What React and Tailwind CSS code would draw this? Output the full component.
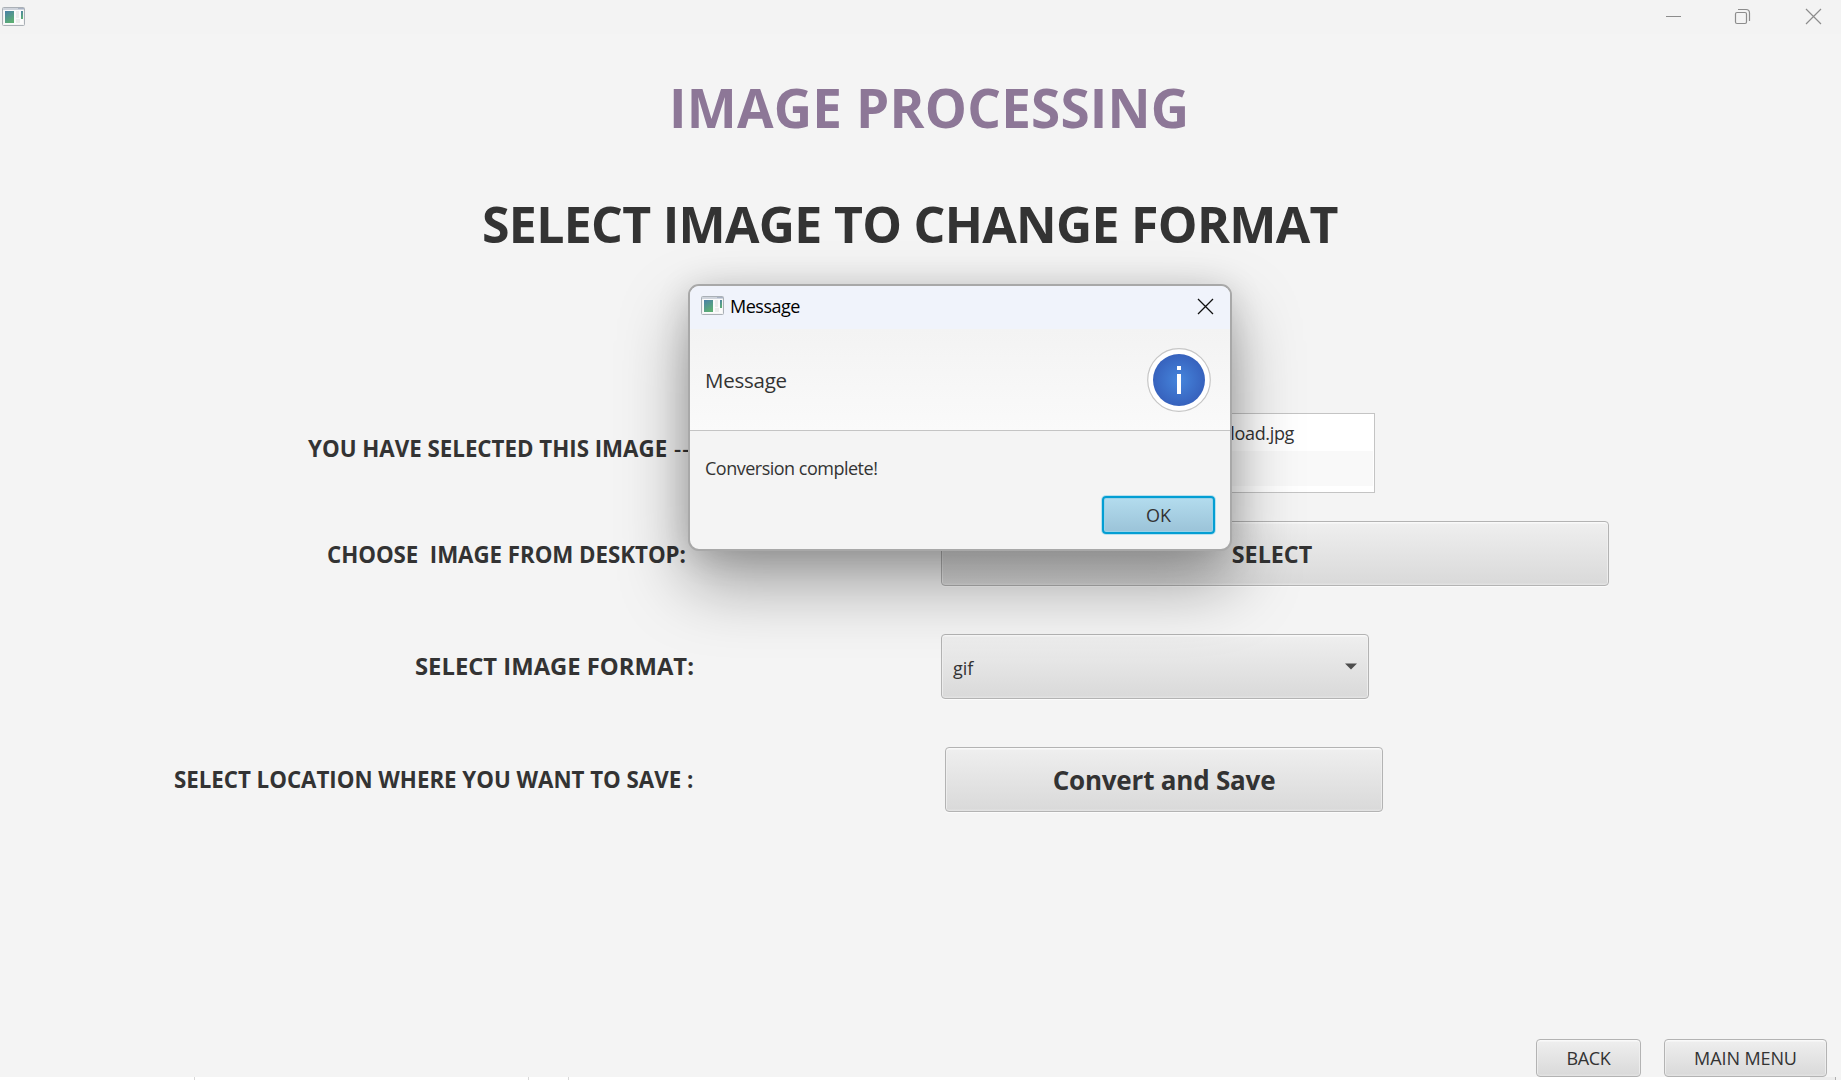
const face =
  "flex shrink-0 items-center whitespace-pre rounded-[4px] border border-[#b3b3b3] bg-linear-to-b from-[#efefef] to-[#d9d9d9] shadow-[inset_0_1px_0_0.5px_#f9f9f9,inset_0_-1px_0_0.5px_#e2e2e2,0_1px_0_#fbfbfb] leading-none";

function AppIcon() {
  return (
    <svg width="24" height="20" viewBox="0 0 24 20" className="block shrink-0">
      <defs>
        <linearGradient id="pane" x1="0" y1="0" x2="0.5" y2="1">
          <stop offset="0" stopColor="#4a7fa8" />
          <stop offset="1" stopColor="#5cae74" />
        </linearGradient>
      </defs>
      <rect x="0.5" y="0.5" width="22" height="18" rx="1" fill="#f4f4f4" stroke="#aab0b6" />
      <rect x="1" y="1" width="21" height="2" fill="#cfd4dc" />
      <rect x="16" y="1" width="6" height="1" fill="#a9b2c4" />
      <rect x="2" y="3" width="19" height="14" fill="#fbfbfb" />
      <rect x="3" y="4" width="9" height="12" fill="url(#pane)" />
      <rect x="14" y="4" width="3" height="7" fill="#ececec" />
      <rect x="14" y="12" width="4" height="4" fill="#ececec" />
      <rect x="19" y="4" width="2" height="8" fill="url(#pane)" />
    </svg>
  );
}

function WindowBar() {
  return (
    <header className="flex h-[34px] shrink-0 items-start justify-between bg-[#f3f3f3] pt-[7px] pr-[17px] pl-[2px]">
      <AppIcon />
      <svg width="160" height="20" viewBox="0 0 160 20" fill="none" stroke="#8c8c8c" className="block">
        <path d="M2 9.5H17" />
        <rect x="71.5" y="5.5" width="11" height="11" rx="1.5" strokeWidth="1.2" />
        <path d="M74 2.5H82a3.5 3.5 0 0 1 3.5 3.5V14" strokeWidth="1.2" />
        <path d="M142 2L157 17M157 2L142 17" strokeWidth="1.2" />
      </svg>
    </header>
  );
}

function FileList() {
  return (
    <div className="mt-px flex h-[80px] w-[434px] flex-col border border-[#c4c4c4] bg-white p-px">
      <div className="flex h-[36px] items-center justify-end pr-[79px] text-[18px] leading-none tracking-[-0.35px]">
        download.jpg
      </div>
      <div className="h-[35px] bg-[#f9f9f9]" />
    </div>
  );
}

function MessageDialog() {
  return (
    <div className="absolute top-[284px] left-[688px] flex h-[267px] w-[544px] flex-col overflow-hidden rounded-[11px] border-2 border-[#a8a8a8] bg-[#f4f4f4] shadow-[0_32px_68px_rgba(0,0,0,0.36),0_4px_34px_rgba(0,0,0,0.14)]">
      <div className="flex h-[43px] shrink-0 items-start justify-between bg-[#f0f3fb] pt-[10px] pr-[16px] pl-[11px]">
        <div className="flex items-start">
          <AppIcon />
          <span className="-mt-px ml-[5px] text-[18px] leading-[22px] tracking-[-0.5px] text-black">Message</span>
        </div>
        <svg width="17" height="17" viewBox="0 0 17 17" className="mt-[2px]" stroke="#111" strokeWidth="1.3">
          <path d="M1 1L16 16M16 1L1 16" />
        </svg>
      </div>
      <div className="flex h-[102px] shrink-0 items-center justify-between border-b border-[#c4c4c4] bg-linear-to-b from-[#f3f3f3] to-[#fafafa] pr-[18px] pl-[15px]">
        <span className="mt-[2px] text-[20.5px] leading-none tracking-[-0.25px]">Message</span>
        <svg width="66" height="66" viewBox="0 0 66 66">
          <defs>
            <radialGradient id="info">
              <stop offset="0" stopColor="#4585dc" />
              <stop offset="1" stopColor="#3762bd" />
            </radialGradient>
          </defs>
          <circle cx="33" cy="33" r="31.3" fill="#fff" stroke="#c6c6c6" strokeWidth="1.2" />
          <circle cx="33" cy="33" r="26" fill="url(#info)" />
          <rect x="31" y="19" width="4" height="4" fill="#fff" />
          <rect x="31" y="27" width="4" height="20" fill="#fff" />
        </svg>
      </div>
      <div className="mt-[26px] pl-[15px] text-[18px] leading-[22px] tracking-[-0.5px]">Conversion complete!</div>
      <div className="mt-[17px] mr-[15px] flex h-[38px] w-[113px] shrink-0 items-center justify-center self-end rounded-[4px] border-2 border-[#039ed3] bg-linear-to-b from-[#b3dcee] to-[#9bc3d8] text-[18px] leading-none shadow-[0_0_0_1px_#b8e0ee,inset_0_0_0_1px_#9ad2e8]">
        OK
      </div>
    </div>
  );
}

function Row({ label, className, children }) {
  return (
    <div className="flex items-center">
      <div className={"shrink-0 leading-none font-bold whitespace-pre " + className}>{label}</div>
      {children}
    </div>
  );
}

function StatusStrip() {
  return (
    <div className="flex h-[3px] shrink-0 bg-white">
      <div className="w-[195px] border-r border-[#d8d8d8]" />
      <div className="w-[334px] border-r border-[#d8d8d8]" />
      <div className="w-[40px] border-r border-[#d8d8d8]" />
      <div className="flex-1" />
      <div className="w-[26px] border-r border-[#b0b0b0] bg-[#ececec]" />
      <div className="w-[5px] bg-[#f3f3f3]" />
    </div>
  );
}

const selectedLabel = (
  <>
    YOU HAVE SELECTED THIS IMAGE <span className="ml-px font-semibold tracking-[1.2px]">-----</span>
  </>
);

export default function App() {
  return (
    <div className="relative flex h-[1080px] w-[1841px] flex-col overflow-hidden bg-[#f4f4f4] font-['Open_Sans','Noto_Sans',sans-serif] text-[#333333]">
      <WindowBar />
      <h1 className="mt-[37px] flex h-[72px] shrink-0 items-center pl-[669px] text-[53px] leading-none font-bold tracking-[0.2px] whitespace-pre text-[#8d7797]">
        IMAGE PROCESSING
      </h1>
      <h2 className="mt-[46px] flex h-[70px] shrink-0 items-center pl-[482px] text-[50px] leading-none font-bold tracking-[-0.7px] whitespace-pre">
        SELECT IMAGE TO CHANGE FORMAT
      </h2>

      <main className="mt-[153px] flex flex-1 flex-col">
        <Row label={selectedLabel} className="w-[941px] pb-[6px] pl-[308px] text-[22.3px]">
          <FileList />
        </Row>
        <div className="h-[28px]" />
        <Row label="CHOOSE  IMAGE FROM DESKTOP:" className="w-[941px] pt-[3px] pl-[327px] text-[22.3px] tracking-[-0.04px]">
          <div className={face + " h-[65px] w-[668px] justify-center pt-[2px] pr-[6px] text-[23.3px] font-bold"}>SELECT</div>
        </Row>
        <div className="h-[48px]" />
        <Row label="SELECT IMAGE FORMAT:" className="w-[941px] pl-[415px] text-[23.8px]">
          <div className={face + " h-[65px] w-[428px] justify-between pr-[11px] pl-[11px] text-[18px]"}>
            <span className="pt-[2px]">gif</span>
            <svg width="12" height="7" viewBox="0 0 12 7" fill="#4d4d4d">
              <path d="M0 0.5H12L6 6.5Z" />
            </svg>
          </div>
        </Row>
        <div className="h-[48px]" />
        <Row label="SELECT LOCATION WHERE YOU WANT TO SAVE :" className="w-[945px] pt-[2px] pl-[174px] text-[22.3px] tracking-[-0.02px]">
          <div className={face + " h-[65px] w-[438px] justify-center text-[26px] font-bold tracking-[-0.2px]"}>Convert and Save</div>
        </Row>
      </main>

      <footer className="flex shrink-0 justify-end gap-[23px] pr-[14px] text-[18px]">
        <div className={face + " h-[38px] w-[105px] justify-center tracking-[-0.4px]"}>BACK</div>
        <div className={face + " h-[38px] w-[163px] justify-center tracking-[-0.1px]"}>MAIN MENU</div>
      </footer>
      <StatusStrip />
      <MessageDialog />
    </div>
  );
}
